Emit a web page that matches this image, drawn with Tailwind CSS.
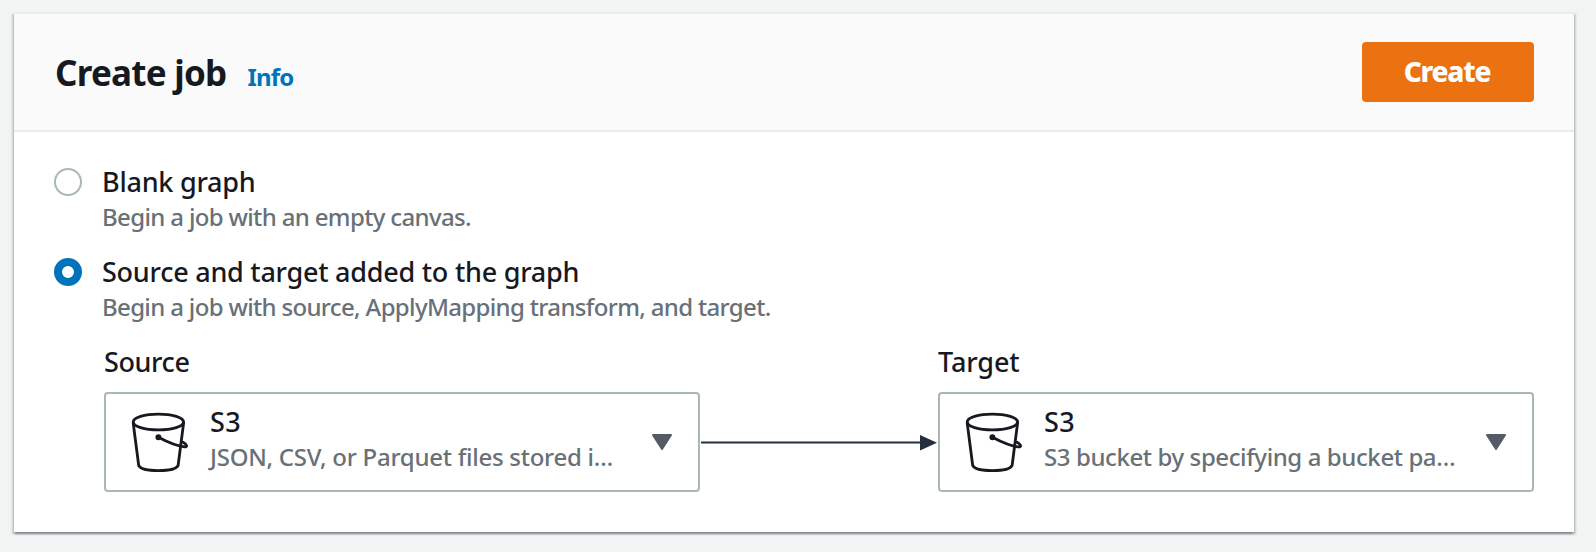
<!DOCTYPE html>
<html lang="en">
<head>
  <meta charset="UTF-8">
  <title>Create job</title>
  <script src="https://cdn.jsdelivr.net/npm/@tailwindcss/browser@4"></script>
</head>
<body class="h-[552px] overflow-hidden bg-[#f2f4f4] px-3.5 pt-3 pr-[22px] font-['Noto_Sans',sans-serif] text-[#16191f]">
  <main class="h-[520px] border-t-2 border-[#eaeded] bg-white shadow-[0_2px_2px_0_rgba(0,28,36,0.3),2px_2px_2px_0_rgba(0,28,36,0.15),-2px_2px_2px_0_rgba(0,28,36,0.15)]">
    <!-- Header -->
    <header class="flex h-[118px] items-center justify-between border-b-2 border-[#eaeded] bg-[#fafafa] px-10">
      <div class="flex items-baseline gap-[21px] pt-0.5 pl-px whitespace-nowrap">
        <h1 class="text-[35px] leading-[50px] font-bold tracking-[-0.75px]">Create job</h1>
        <a href="#" class="text-[24px] font-bold tracking-[-0.8px] text-[#0073bb]">Info</a>
      </div>
      <button class="h-[60px] w-[172px] rounded bg-[#ec7211] pr-0.5 pb-0.5 text-[28px] font-extrabold tracking-[-1.2px] text-white">Create</button>
    </header>

    <section class="pt-[30px] pr-10 pl-10 whitespace-nowrap">
      <!-- Radio options -->
      <label class="flex h-[90px] gap-5">
        <span class="mt-1.5 size-7 rounded-full border-2 border-[#aab7b8] bg-white"></span>
        <span class="flex flex-col pt-px">
          <span class="h-[38px] text-[27px] leading-[38px] font-medium tracking-[-0.25px]">Blank graph</span>
          <span class="text-[24px] leading-8 font-medium tracking-[-0.65px] text-[#687078]">Begin a job with an empty canvas.</span>
        </span>
      </label>
      <label class="flex h-[90px] gap-5">
        <span class="mt-1.5 size-7 rounded-full border-8 border-[#0073bb] bg-white"></span>
        <span class="flex flex-col pt-px">
          <span class="h-[38px] text-[27px] leading-[38px] font-medium tracking-[-0.25px]">Source and target added to the graph</span>
          <span class="text-[24px] leading-8 font-medium tracking-[-0.66px] text-[#687078]">Begin a job with source, ApplyMapping transform, and target.</span>
        </span>
      </label>

      <!-- Source -> target -->
      <div class="flex items-end pl-[50px]">
        <div class="w-[596px]">
          <h2 class="mb-[11px] pt-px text-[27px] leading-[38px] font-medium tracking-[-0.4px]">Source</h2>
          <div class="flex h-[100px] rounded border-2 border-[#aab7b8] bg-white pl-6">
            <svg class="mt-[18px] size-[60px] shrink-0" viewBox="0 0 60 60" fill="none" stroke="#16191f" stroke-width="2.8" stroke-linecap="round" stroke-linejoin="round">
              <ellipse cx="28.4" cy="10" rx="25.2" ry="7.9"></ellipse>
              <path d="M3.2 11 8.7 53.5C10.5 57 18 58.6 28.4 58.6S46.3 57 48.1 53.5L53.6 11"></path>
              <path d="M28.4 25.3C36 29.3 46 34.2 54.5 34.9C57.6 35 57.4 32.8 53 30.3"></path>
              <circle cx="28.4" cy="25.3" r="1.6" fill="#16191f"></circle>
            </svg>
            <div class="ml-5 w-[442px] pt-[9px]">
              <div class="h-[38px] text-[27px] leading-[38px] font-medium tracking-[0.5px]">S3</div>
              <div class="text-[24px] leading-8 font-medium tracking-[-0.26px] text-[#687078]">JSON, CSV, or Parquet files stored i…</div>
            </div>
            <svg class="mt-10 h-4 w-5 shrink-0" viewBox="0 0 20 16" fill="#545b64" stroke="#545b64" stroke-width="2" stroke-linejoin="round">
              <path d="M1 1h18L10 15z"></path>
            </svg>
          </div>
        </div>
        <svg class="mb-[41px] h-4 w-[238px]" viewBox="0 0 238 16">
          <path d="M1 7.5h222" stroke="#232f3e" stroke-width="1.8"></path>
          <path d="M220 0v15.5l17-7.7z" fill="#232f3e"></path>
        </svg>
        <div class="w-[596px]">
          <h2 class="mb-[11px] pt-px text-[27px] leading-[38px] font-medium tracking-[-0.1px]">Target</h2>
          <div class="flex h-[100px] rounded border-2 border-[#aab7b8] bg-white pl-6">
            <svg class="mt-[18px] size-[60px] shrink-0" viewBox="0 0 60 60" fill="none" stroke="#16191f" stroke-width="2.8" stroke-linecap="round" stroke-linejoin="round">
              <ellipse cx="28.4" cy="10" rx="25.2" ry="7.9"></ellipse>
              <path d="M3.2 11 8.7 53.5C10.5 57 18 58.6 28.4 58.6S46.3 57 48.1 53.5L53.6 11"></path>
              <path d="M28.4 25.3C36 29.3 46 34.2 54.5 34.9C57.6 35 57.4 32.8 53 30.3"></path>
              <circle cx="28.4" cy="25.3" r="1.6" fill="#16191f"></circle>
            </svg>
            <div class="ml-5 w-[442px] pt-[9px]">
              <div class="h-[38px] text-[27px] leading-[38px] font-medium tracking-[0.5px]">S3</div>
              <div class="text-[24px] leading-8 font-medium tracking-[-0.4px] text-[#687078]">S3 bucket by specifying a bucket pa…</div>
            </div>
            <svg class="mt-10 h-4 w-5 shrink-0" viewBox="0 0 20 16" fill="#545b64" stroke="#545b64" stroke-width="2" stroke-linejoin="round">
              <path d="M1 1h18L10 15z"></path>
            </svg>
          </div>
        </div>
      </div>
    </section>
  </main>
</body>
</html>
